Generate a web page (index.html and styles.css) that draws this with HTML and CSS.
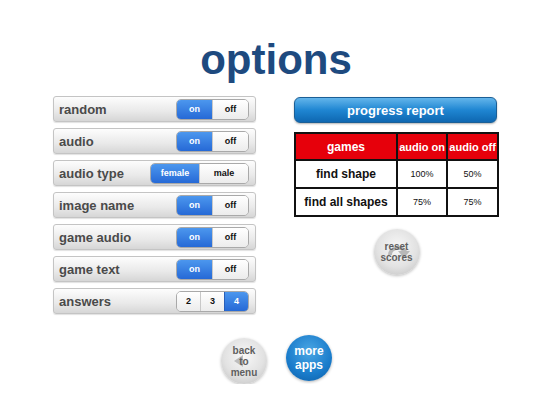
FILE: index.html
```html
<!DOCTYPE html>
<html lang="en">
<head>
  <meta charset="UTF-8">
  <meta name="viewport" content="width=device-width, initial-scale=1.0">
  <title>Options</title>
  <link rel="stylesheet" href="styles.css">
</head>
<body>

<h1>options</h1>

<div class="main">
  <!-- Settings list -->
  <div class="settings">
    <div class="row">
      <span class="label">random</span>
      <div class="toggle"><span class="seg on">on</span><span class="seg">off</span></div>
    </div>
    <div class="row">
      <span class="label">audio</span>
      <div class="toggle"><span class="seg on">on</span><span class="seg">off</span></div>
    </div>
    <div class="row">
      <span class="label">audio type</span>
      <div class="toggle wide"><span class="seg on">female</span><span class="seg">male</span></div>
    </div>
    <div class="row">
      <span class="label">image name</span>
      <div class="toggle"><span class="seg on">on</span><span class="seg">off</span></div>
    </div>
    <div class="row">
      <span class="label">game audio</span>
      <div class="toggle"><span class="seg on">on</span><span class="seg">off</span></div>
    </div>
    <div class="row">
      <span class="label">game text</span>
      <div class="toggle"><span class="seg on">on</span><span class="seg">off</span></div>
    </div>
    <div class="row">
      <span class="label">answers</span>
      <div class="toggle three"><span class="seg">2</span><span class="seg">3</span><span class="seg on">4</span></div>
    </div>
  </div>

  <!-- Progress report -->
  <div class="report">
    <button class="report-button">progress report</button>
    <table class="scores">
      <tr>
        <th class="col-game">games</th>
        <th>audio on</th>
        <th>audio off</th>
      </tr>
      <tr>
        <td class="game">find shape</td>
        <td>100%</td>
        <td>50%</td>
      </tr>
      <tr>
        <td class="game">find all shapes</td>
        <td>75%</td>
        <td>75%</td>
      </tr>
    </table>
    <button class="round grey reset">
      <svg class="bg-icon" width="30" height="24" viewBox="0 0 30 24">
        <path d="M6 14 A10 9 0 0 1 25 10 L28 10 L22 17 L16 10 L20 10 A6 5 0 0 0 10 14 Z" fill="#b8b8b8"/>
      </svg>
      <span class="txt">reset<br>scores</span>
    </button>
  </div>
</div>

<div class="bottom">
  <button class="round grey back">
    <span class="arrow"></span>
    <span class="txt">back<br>to<br>menu</span>
  </button>
  <button class="round blue more"><span class="txt">more<br>apps</span></button>
</div>

</body>
</html>
```
FILE: styles.css
```css
body {
  margin: 0;
  padding: 0;
  background-color: white;
  font-family: "Liberation Sans", Arial, sans-serif;
}

h1 {
  margin: 0;
  padding-top: 35px;
  text-align: center;
  color: #1e4a7f;
  font-size: 42px;
  line-height: 50px;
  font-weight: bold;
}

.main {
  display: flex;
  gap: 38px;
  margin-top: 11px;
  padding-left: 53px;
}

.settings {
  width: 203px;
}

.row {
  box-sizing: border-box;
  height: 26px;
  margin-bottom: 6px;
  display: flex;
  align-items: center;
  justify-content: space-between;
  padding: 0 6px 0 5px;
  border: 1px solid #c4c4c4;
  border-radius: 3px;
  background: linear-gradient(#fdfdfd, #e9e9e9 60%, #d6d6d6);
  box-shadow: 0 1px 1px rgba(0,0,0,0.12);
}

.label {
  color: #4a4a4a;
  font-size: 13px;
  font-weight: bold;
}

.toggle {
  display: flex;
  height: 21px;
  border: 1px solid #a9a9a9;
  border-radius: 5px;
  overflow: hidden;
  box-sizing: border-box;
}

.seg {
  width: 35px;
  display: flex;
  align-items: center;
  justify-content: center;
  font-size: 9px;
  font-weight: bold;
  color: #111;
  background: linear-gradient(#ffffff, #ececec);
}

.seg + .seg {
  border-left: 1px solid #c8c8c8;
}

.seg.on {
  color: white;
  background: linear-gradient(#4c97ee, #2669d6);
  border-color: #2a5fb8;
}

.toggle.wide .seg {
  width: 48px;
}

.toggle.three .seg {
  width: 23px;
}

.report {
  width: 205px;
  display: flex;
  flex-direction: column;
  align-items: center;
  padding-top: 1px;
}

.report-button {
  width: 203px;
  height: 26px;
  margin: 0 2px 9px 0;
  border: 1px solid #1b5f96;
  border-radius: 6px;
  background: linear-gradient(#63b5eb, #1f86d2 50%, #0e67b1);
  color: white;
  font-family: inherit;
  font-size: 13px;
  font-weight: bold;
  box-shadow: 0 1px 2px rgba(0,0,0,0.3);
}

.scores {
  width: 205px;
  border-collapse: collapse;
  border: 2px solid #111;
}

.scores th,
.scores td {
  border: 2px solid #111;
  text-align: center;
  padding: 0;
}

.scores th {
  height: 25px;
  background-color: #e6000b;
  color: white;
  font-size: 11px;
  font-weight: bold;
}

.scores th.col-game {
  width: 100px;
  font-size: 12px;
}

.scores td {
  height: 26px;
  font-size: 9px;
  color: #111;
}

.scores td.game {
  font-size: 12px;
  font-weight: bold;
}

.round {
  position: relative;
  width: 46px;
  height: 46px;
  border-radius: 50%;
  border: none;
  padding: 0;
  font-family: inherit;
  font-weight: bold;
  display: flex;
  align-items: center;
  justify-content: center;
  text-align: center;
}

.round.grey {
  background: radial-gradient(circle at 50% 40%, #f8f8f8 0%, #e2e2e2 55%, #bdbdbd 100%);
  box-shadow: 0 1px 3px rgba(0,0,0,0.25);
  color: #5f5f5f;
  font-size: 10px;
  line-height: 11px;
}

.round.blue {
  background: radial-gradient(circle at 50% 35%, #4aa6e4 0%, #1a7ccb 60%, #0c5ca4 100%);
  box-shadow: 0 1px 3px rgba(0,0,0,0.3);
  color: white;
  font-size: 12px;
  line-height: 14px;
}

.txt {
  position: relative;
}

.bg-icon {
  position: absolute;
  left: 8px;
  top: 12px;
}

.reset {
  margin-top: 12px;
}

.arrow {
  position: absolute;
  left: 13px;
  top: 17px;
  border-top: 6px solid transparent;
  border-bottom: 6px solid transparent;
  border-right: 9px solid #bdbdbd;
}

.bottom {
  display: flex;
  justify-content: center;
  align-items: flex-start;
  gap: 19px;
  margin-top: 15px;
  padding-left: 1px;
}

.back {
  margin-top: 3px;
}
```
